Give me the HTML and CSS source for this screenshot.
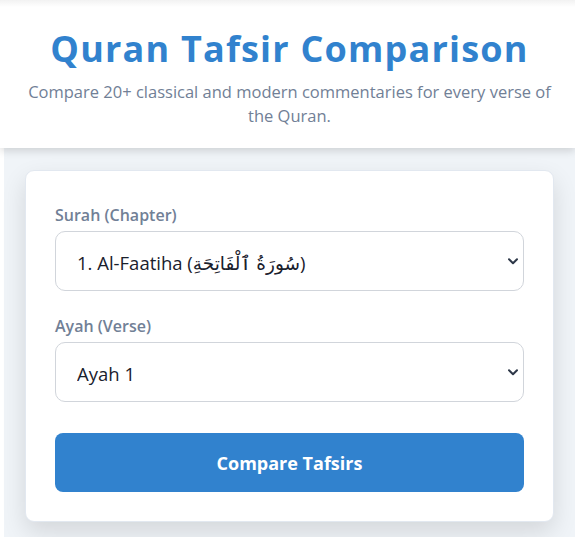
FILE: index.html
```html
<!DOCTYPE html>
<html lang="en">
<head>
<meta charset="utf-8">
<title>Quran Tafsir Comparison</title>
<link rel="stylesheet" href="styles.css">
</head>
<body>
<header class="site-header">
  <h1 class="title">Quran Tafsir Comparison</h1>
  <p class="subtitle">Compare 20+ classical and modern commentaries for every verse of the Quran.</p>
</header>
<main class="main">
  <form class="card">
    <div class="field">
      <label class="label" for="surah">Surah (Chapter)</label>
      <div class="select-wrap">
        <select id="surah" class="select">
          <option>1. Al-Faatiha (سُورَةُ ٱلْفَاتِحَةِ)</option>
        </select>
        <svg class="chevron" width="10" height="7" viewBox="0 0 10 7"><path d="M1 1.2 L5 5.2 L9 1.2" fill="none" stroke="#2d3748" stroke-width="2" stroke-linecap="round" stroke-linejoin="round"/></svg>
      </div>
    </div>
    <div class="field">
      <label class="label" for="ayah">Ayah (Verse)</label>
      <div class="select-wrap">
        <select id="ayah" class="select">
          <option>Ayah 1</option>
        </select>
        <svg class="chevron" width="10" height="7" viewBox="0 0 10 7"><path d="M1 1.2 L5 5.2 L9 1.2" fill="none" stroke="#2d3748" stroke-width="2" stroke-linecap="round" stroke-linejoin="round"/></svg>
      </div>
    </div>
    <button type="button" class="button">Compare Tafsirs</button>
  </form>
</main>
</body>
</html>
```
FILE: styles.css
```css
html, body {
  margin: 0;
  padding: 0;
}
body {
  background: #ffffff;
  padding-left: 4px;
  font-family: "Open Sans", "Noto Sans", "DejaVu Sans", sans-serif;
  height: 537px;
  overflow: hidden;
}
.site-header {
  background: linear-gradient(#f2f2f2 0px, #ffffff 7px);
  height: 148px;
  box-sizing: border-box;
  padding-top: 24px;
  text-align: center;
  box-shadow: 0 3px 8px rgba(0, 0, 0, 0.14);
  position: relative;
  z-index: 1;
  margin-left: -4px;
  padding-left: 4px;
}
.title {
  margin: 0;
  font-size: 36px;
  line-height: 50px;
  font-weight: 700;
  color: #3182ce;
  letter-spacing: 1.2px;
}
.subtitle {
  margin: 6px 0 0;
  font-size: 16.5px;
  line-height: 24px;
  color: #718096;
  padding: 0 20px;
}
.main {
  background: #f0f4f8;
  padding: 22px 21px 40px;
  min-height: 400px;
}
.card {
  background: #ffffff;
  border: 1px solid #e2e8f0;
  border-radius: 9px;
  box-shadow: 0 10px 25px rgba(0, 0, 0, 0.12);
  padding: 33px 29px 29px;
  display: flex;
  flex-direction: column;
}
.field {
  display: flex;
  flex-direction: column;
  gap: 5px;
  margin-bottom: 24px;
}
.field + .button {
  margin-top: 7px;
}
.label {
  font-size: 16px;
  line-height: 22px;
  font-weight: 600;
  color: #718096;
}
.select-wrap {
  position: relative;
}
.select {
  appearance: none;
  -webkit-appearance: none;
  width: 100%;
  height: 60px;
  box-sizing: border-box;
  border: 1px solid #d1d5db;
  border-radius: 10px;
  background: #ffffff;
  padding: 3px 40px 0 21px;
  font-family: "Open Sans", "Noto Sans", "DejaVu Sans", sans-serif;
  font-size: 18.5px;
  color: #1a202c;
}
.chevron {
  position: absolute;
  right: 6px;
  top: 27px;
  pointer-events: none;
}
.button {
  height: 59px;
  border: 0;
  border-radius: 8px;
  background: #3182ce;
  color: #ffffff;
  font-family: "Open Sans", "Noto Sans", "DejaVu Sans", sans-serif;
  font-size: 18px;
  font-weight: 700;
}
```
